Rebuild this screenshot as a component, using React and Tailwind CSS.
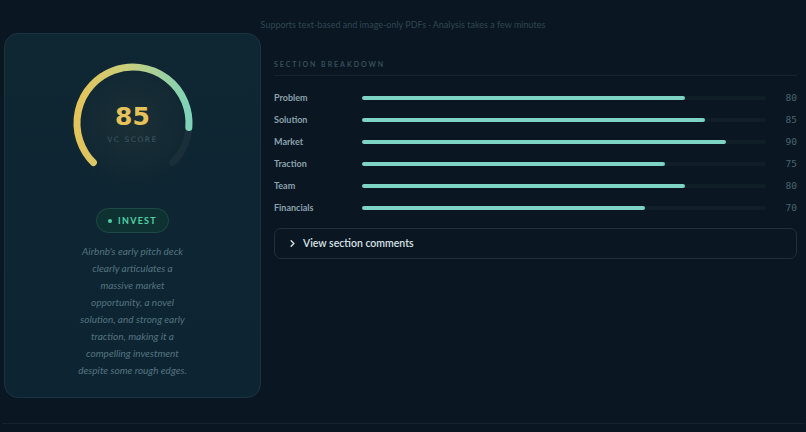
import { ChevronRight } from 'lucide-react'

const sections = [
  { name: 'Problem', score: 80 },
  { name: 'Solution', score: 85 },
  { name: 'Market', score: 90 },
  { name: 'Traction', score: 75 },
  { name: 'Team', score: 80 },
  { name: 'Financials', score: 70 },
]

function ScoreGauge({ score }) {
  const r = 56
  const c = 70
  const start = -135
  const end = start + (270 * score) / 100
  const pt = (deg) => {
    const rad = (deg * Math.PI) / 180
    return [c + r * Math.sin(rad), c - r * Math.cos(rad)]
  }
  const [sx, sy] = pt(start)
  const [ex, ey] = pt(end)
  const [tx, ty] = pt(135)
  const large = end - start > 180 ? 1 : 0

  return (
    <div className="relative w-[140px] h-[140px]">
      <svg width="140" height="140" viewBox="0 0 140 140">
        <defs>
          <linearGradient id="gaugeGrad" x1="14" y1="0" x2="126" y2="0" gradientUnits="userSpaceOnUse">
            <stop offset="0%" stopColor="#e4c35a" />
            <stop offset="45%" stopColor="#c9cf7c" />
            <stop offset="100%" stopColor="#7ed3b8" />
          </linearGradient>
          <radialGradient id="gaugeGlow" cx="50%" cy="50%" r="50%">
            <stop offset="0%" stopColor="#e4c35a" stopOpacity="0.06" />
            <stop offset="100%" stopColor="#e4c35a" stopOpacity="0" />
          </radialGradient>
        </defs>
        <circle cx={c} cy={c} r="66" fill="url(#gaugeGlow)" />
        <path
          d={`M ${sx} ${sy} A ${r} ${r} 0 1 1 ${tx} ${ty}`}
          fill="none"
          stroke="#1a2f3a"
          strokeWidth="7"
          strokeLinecap="round"
        />
        <path
          d={`M ${sx} ${sy} A ${r} ${r} 0 ${large} 1 ${ex} ${ey}`}
          fill="none"
          stroke="url(#gaugeGrad)"
          strokeWidth="7"
          strokeLinecap="round"
        />
      </svg>
      <div className="absolute inset-0 flex flex-col items-center pt-[50px]">
        <span className="text-[25px] leading-[28px] font-bold text-[#e6c35a] font-['DejaVu_Sans',sans-serif]">
          {score}
        </span>
        <span className="mt-[4px] text-[7.5px] leading-[10px] tracking-[0.2em] text-[#3f5864] font-['DejaVu_Sans',sans-serif]">
          VC SCORE
        </span>
      </div>
    </div>
  )
}

export default function App() {
  return (
    <div className="w-[806px] h-[432px] bg-[#0a1621] overflow-hidden font-['Lato','Noto_Sans',sans-serif] flex flex-col">
      {/* Hint */}
      <p className="pt-[19px] text-center text-[9px] leading-[12px] text-[#2f4653]">
        Supports text-based and image-only PDFs · Analysis takes a few minutes
      </p>

      <div className="flex gap-[13px] pl-[4px] pr-[9px] mt-[2px]">
        {/* Score card */}
        <div className="w-[257px] h-[365px] shrink-0 rounded-[14px] border border-[#1b3441] bg-gradient-to-b from-[#0f2633] to-[#0d2532] flex flex-col items-center pt-[19px]">
          <ScoreGauge score={85} />

          <div className="mt-[15px] h-[25px] px-[11px] rounded-full border border-[#1e4a45] bg-[#0e3131] flex items-center gap-[6px]">
            <span className="w-[4px] h-[4px] rounded-full bg-[#4fd1a5]" />
            <span className="text-[9px] font-bold tracking-[0.14em] text-[#4fd1a5]">INVEST</span>
          </div>

          <p className="mt-[10px] w-[111px] text-center italic text-[10px] leading-[17px] text-[#557380]">
            Airbnb's early pitch deck clearly articulates a massive market opportunity, a novel solution, and strong early traction, making it a compelling investment despite some rough edges.
          </p>
        </div>

        {/* Breakdown */}
        <div className="flex-1 pt-[27px]">
          <div className="pb-[6px] border-b border-[#15252f]">
            <span className="text-[7px] leading-[9px] font-bold tracking-[0.28em] text-[#364f5b] block">
              SECTION BREAKDOWN
            </span>
          </div>

          <div className="mt-[11px] flex flex-col">
            {sections.map((s) => (
              <div key={s.name} className="h-[22px] flex items-center">
                <span className="w-[88px] text-[9px] font-bold text-[#8aa1ac]">{s.name}</span>
                <div className="w-[404px] h-[3.5px] rounded-full bg-[#101e28]">
                  <div className="h-full rounded-full bg-[#7dd3c4]" style={{ width: `${s.score}%` }} />
                </div>
                <span className="flex-1 text-right text-[9.5px] text-[#4a6470] font-['DejaVu_Sans_Mono',monospace]">
                  {s.score}
                </span>
              </div>
            ))}
          </div>

          <button className="mt-[9px] w-full h-[31px] rounded-[7px] border border-[#1f313c] flex items-center pl-[12px] gap-[5px] text-left">
            <ChevronRight size={11} strokeWidth={3} className="text-[#d8e2e6]" />
            <span className="text-[10.5px] font-semibold text-[#d8e2e6]">View section comments</span>
          </button>
        </div>
      </div>

      <div className="mt-auto mb-[8px] mx-[2px] border-t border-[#15252f]" />
    </div>
  )
}
